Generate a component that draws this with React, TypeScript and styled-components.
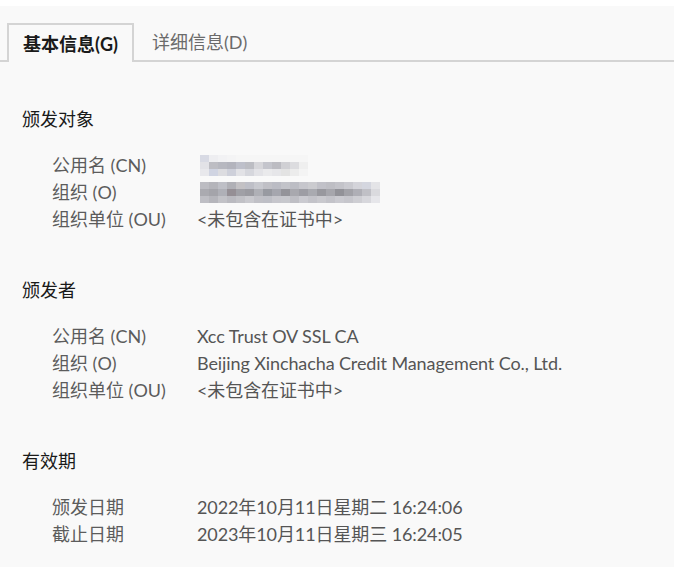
import styled, { createGlobalStyle } from 'styled-components';

const GlobalStyle = createGlobalStyle`
    html, body {
        margin: 0;
        padding: 0;
        background: #f9f9f9;
    }
    body {
        font-family: Lato, "Noto Sans CJK SC", sans-serif;
    }
`;

const Window = styled.div`
    width: 674px;
    height: 567px;
    background: #f9f9f9;
    border-top: 6px solid #ffffff;
    box-sizing: border-box;
    overflow: hidden;
`;

const TabBar = styled.div`
    display: flex;
    align-items: flex-end;
    height: 56px;
    padding-left: 7px;
    border-bottom: 2px solid #d4d4d4;
    box-sizing: border-box;
`;

const Tab = styled.div<{ active?: boolean }>`
    height: ${(p) => (p.active ? '39px' : '37px')};
    margin-bottom: ${(p) => (p.active ? '-2px' : '0')};
    padding: 0 ${(p) => (p.active ? '14px' : '18px')};
    display: flex;
    align-items: center;
    box-sizing: border-box;
    font-size: 18px;
    font-weight: ${(p) => (p.active ? 700 : 400)};
    color: ${(p) => (p.active ? '#1a1a1a' : '#6b6b6b')};
    background: #f9f9f9;
    border: ${(p) => (p.active ? '2px solid #d4d4d4' : 'none')};
    border-bottom: none;
    padding-bottom: 2px;
`;

const Content = styled.div`
    padding: 46px 0 0 22px;
`;

const Section = styled.section`
    margin-bottom: 46px;
`;

const SectionTitle = styled.div`
    font-size: 18px;
    color: #1a1a1a;
    height: 22px;
    line-height: 22px;
    margin-bottom: 22px;
`;

const Rows = styled.div`
    display: grid;
    grid-template-columns: 145px 1fr;
    grid-auto-rows: 27px;
    padding-left: 30px;
`;

const Label = styled.div`
    font-size: 18px;
    color: #5c5c5c;
    line-height: 27px;
    white-space: nowrap;
`;

const Value = styled.div`
    font-size: 18px;
    color: #555555;
    line-height: 27px;
    white-space: nowrap;
    display: flex;
    align-items: center;
    letter-spacing: -0.1px;
`;

const Mosaic = styled.div<{ width: number }>`
    display: grid;
    grid-template-columns: repeat(auto-fill, 9px);
    grid-auto-rows: 7px;
    width: ${(p) => p.width}px;
    margin-left: 3px;
    filter: blur(0.7px);
`;

const Cell = styled.div``;

const cnShades = [
    '#d8dae4', '#eeeef1', '#f2f2f4', '#f4f4f5', '#f6f6f6', '#f6f6f6', '#f6f6f6', '#f6f6f6', '#f6f6f6', '#f6f6f6', '#f6f6f6', '#f6f6f6',
    '#e2e2e7', '#bdbdc3', '#b7b8c0', '#b3b4bd', '#bec0ca', '#bcbdc3', '#d6d6da', '#c4c5cc', '#bcbcc2', '#d0d0d4', '#dcdcdf', '#efefef',
    '#e8e8ec', '#d0d4e2', '#dcdce0', '#ced0da', '#e2e2e6', '#d6d7dd', '#e3e3e7', '#eaeaec', '#e6e6e9', '#e3e3e3', '#ececec', '#f4f4f4',
];

const oShades = [
    '#bcbcc2', '#b4b4ba', '#bebfc6', '#b0b0b6', '#c3c1c4', '#bebfc7', '#c8c9cf', '#c0c0c6', '#bbbcc4', '#c2c3c9', '#bcbdc4', '#c6c6cc', '#cbcbcf', '#c1c1c8', '#bebec4', '#c3c3c9', '#cacad0', '#d4d4da', '#d4d6df', '#e4e4e7',
    '#aaaab0', '#a4a4aa', '#afb0b7', '#958f95', '#a0a0a6', '#9b9ba1', '#afb0b6', '#989aa1', '#a5a6ae', '#94949a', '#a8a8ae', '#9d9da4', '#a9aab0', '#98989e', '#a6a6ac', '#929298', '#a2a2a8', '#afafb6', '#c0c0c6', '#dadade',
    '#bebec4', '#b5b5bb', '#c2c2c7', '#babac0', '#c1c1c6', '#c9c9ce', '#c0c0c6', '#bebfc6', '#c6c6cc', '#c7c8cd', '#bebec4', '#cacad0', '#c3c3c9', '#c9c9ce', '#c3c3c9', '#cacad0', '#c6c6cc', '#ceced3', '#d7d7dc', '#e6e6ea',
];

const Blurred = ({ shades, width }: { shades: string[]; width: number }) => (
    <Mosaic width={width}>
        {shades.map((c, i) => (
            <Cell key={i} style={{ background: c }} />
        ))}
    </Mosaic>
);

const NOT_INCLUDED = '<未包含在证书中>';

const App = () => {
    return (
        <>
            <GlobalStyle />
            <Window>
                <TabBar>
                    <Tab active>基本信息(G)</Tab>
                    <Tab>详细信息(D)</Tab>
                </TabBar>
                <Content>
                    <Section>
                        <SectionTitle>颁发对象</SectionTitle>
                        <Rows>
                            <Label>公用名 (CN)</Label>
                            <Value>
                                <Blurred shades={cnShades} width={108} />
                            </Value>
                            <Label>组织 (O)</Label>
                            <Value>
                                <Blurred shades={oShades} width={180} />
                            </Value>
                            <Label>组织单位 (OU)</Label>
                            <Value>{NOT_INCLUDED}</Value>
                        </Rows>
                    </Section>
                    <Section>
                        <SectionTitle>颁发者</SectionTitle>
                        <Rows>
                            <Label>公用名 (CN)</Label>
                            <Value>Xcc Trust OV SSL CA</Value>
                            <Label>组织 (O)</Label>
                            <Value>Beijing Xinchacha Credit Management Co., Ltd.</Value>
                            <Label>组织单位 (OU)</Label>
                            <Value>{NOT_INCLUDED}</Value>
                        </Rows>
                    </Section>
                    <Section>
                        <SectionTitle>有效期</SectionTitle>
                        <Rows>
                            <Label>颁发日期</Label>
                            <Value>2022年10月11日星期二 16:24:06</Value>
                            <Label>截止日期</Label>
                            <Value>2023年10月11日星期三 16:24:05</Value>
                        </Rows>
                    </Section>
                </Content>
            </Window>
        </>
    );
};

export default App;
